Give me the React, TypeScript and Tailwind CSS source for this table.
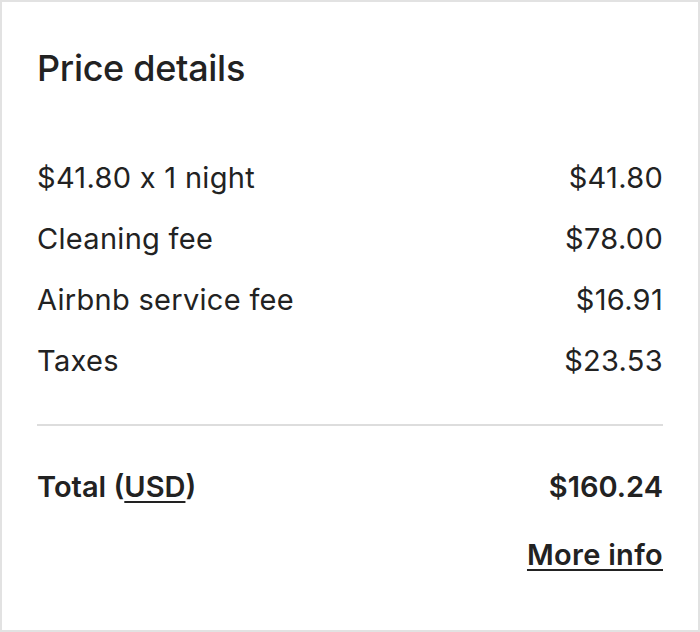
import React from "react";

const rows: [string, string][] = [
  ["$41.80 x 1 night", "$41.80"],
  ["Cleaning fee", "$78.00"],
  ["Airbnb service fee", "$16.91"],
  ["Taxes", "$23.53"],
];

export default function App() {
  return (
    <div
      className="w-[700px] h-[632px] bg-white border-2 border-[#e2e2e2] text-[#222222] px-[35px] box-border"
      style={{ fontFamily: "Inter, 'Noto Sans', sans-serif" }}
    >
      <h1 className="text-[36px] font-medium leading-[40px] mt-[46px] tracking-[-0.3px]">Price details</h1>
      <div className="mt-[72px] flex flex-col gap-[26px]">
        {rows.map(([l, r]) => (
          <div key={l} className="flex justify-between text-[29px] leading-[35px] tracking-[0.3px]">
            <span>{l}</span>
            <span>{r}</span>
          </div>
        ))}
      </div>
      <div className="mt-[46px] h-[2px] bg-[#dddddd]" />
      <div className="mt-[43px] flex justify-between text-[29px] font-semibold leading-[35px]">
        <span>
          Total (<span className="underline underline-offset-4">USD</span>)
        </span>
        <span>$160.24</span>
      </div>
      <div className="mt-[33px] flex justify-end text-[29px] font-semibold leading-[35px] tracking-[0.3px]">
        <span className="underline underline-offset-4">More info</span>
      </div>
    </div>
  );
}
